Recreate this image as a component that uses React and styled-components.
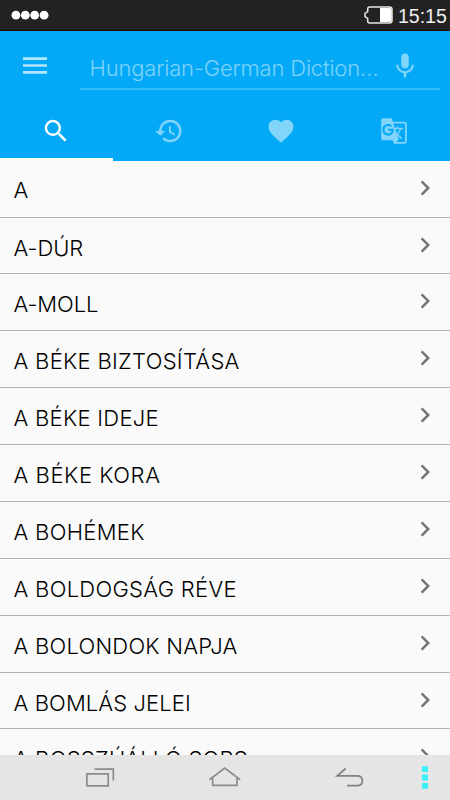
import React from "react";
import styled, { createGlobalStyle } from "styled-components";
import { MdSearch, MdHistory, MdFavorite, MdGTranslate, MdMic, MdChevronRight } from "react-icons/md";

const GlobalStyle = createGlobalStyle`
  * { box-sizing: border-box; }
  body { margin: 0; background: #fafafa; }
`;

const Screen = styled.div`
  width: 450px;
  height: 800px;
  display: flex;
  flex-direction: column;
  overflow: hidden;
  background: #fafafa;
  font-family: Inter, "Liberation Sans", sans-serif;
  font-weight: 300;
`;

const StatusBar = styled.div`
  height: 31px;
  flex: none;
  display: flex;
  align-items: center;
  justify-content: space-between;
  padding: 0 2px 0 11px;
  background: #222;
  border-bottom: 1px solid #1c0d0a;
  svg { display: block; }
`;

const StatusRight = styled.div`
  display: flex;
  align-items: center;
  gap: 5px;
`;

const Clock = styled.span`
  width: 50px;
  font: 400 19.5px/30px "Liberation Sans", sans-serif;
  color: #f2f2f2;
  white-space: nowrap;
  padding-top: 2px;
`;

const Header = styled.header`
  height: 130px;
  flex: none;
  background: #03a9f6;
  display: flex;
  flex-direction: column;
`;

const Toolbar = styled.div`
  height: 70px;
  display: flex;
  padding: 0 10px 0 23px;
`;

const MenuButton = styled.button`
  width: 57px;
  padding: 26px 0 0;
  border: 0;
  background: none;
  display: flex;
  align-items: flex-start;
`;

const SearchField = styled.div`
  flex: 1;
  height: 59px;
  display: flex;
  padding-left: 9.5px;
  border-bottom: 2px solid #36baf8;
`;

const Placeholder = styled.span`
  width: 300px;
  padding-top: 21px;
  font-size: 22px;
  line-height: 32px;
  letter-spacing: -0.16px;
  color: #7fd2fa;
  white-space: nowrap;
`;

const MicIcon = styled(MdMic)`
  width: 30px;
  height: 30px;
  margin-top: 19.5px;
  color: #81d4fa;
`;

const Tabs = styled.nav`
  height: 60px;
  display: grid;
  grid-template-columns: repeat(4, 1fr);
`;

const Tab = styled.div`
  display: flex;
  justify-content: center;
  padding-top: 15px;
  color: ${(p) => (p.$active ? "#fff" : "#81d4fa")};
  border-bottom: ${(p) => (p.$active ? "3px solid #fafafa" : "0")};
  svg { width: 30px; height: 30px; }
`;

const TranslateIcon = styled(MdGTranslate)`
  && {
    width: 28px;
    height: 28px;
    margin-top: 1px;
  }
`;

const WordList = styled.main`
  flex: 1;
  min-height: 0;
  overflow: hidden;
`;

const Row = styled.div`
  height: 56.89px;
  display: flex;
  align-items: flex-start;
  justify-content: space-between;
  padding: 0 10px 0 13.5px;
  border-bottom: 1px solid #b3b3b3;
`;

const FirstRow = styled(Row)`
  height: 56.5px;
  > span { padding-top: 13.4px; }
`;

const Word = styled.span`
  padding-top: 14px;
  font-size: 22px;
  line-height: 32px;
  letter-spacing: ${(p) => p.$tracking}px;
  color: #000;
  white-space: nowrap;
`;

const Chevron = styled(MdChevronRight)`
  width: 30px;
  height: 30px;
  margin-top: 12px;
  color: #757575;
`;

const NavBar = styled.footer`
  height: 45px;
  flex: none;
  display: grid;
  grid-template-columns: 122px 127px 86px 1fr;
  padding-left: 85px;
  align-items: start;
  background: #e5e5e5;
  svg { display: block; margin-top: 10px; }
`;

const words = [
  ["A", 0],
  ["A-DÚR", -0.05],
  ["A-MOLL", -0.1],
  ["A BÉKE BIZTOSÍTÁSA", 0.29],
  ["A BÉKE IDEJE", 0.27],
  ["A BÉKE KORA", 0.56],
  ["A BOHÉMEK", 0.3],
  ["A BOLDOGSÁG RÉVE", 0.29],
  ["A BOLONDOK NAPJA", 0.24],
  ["A BOMLÁS JELEI", 0.1],
  ["A BOSSZÚÁLLÓ SORS", 0.29],
];

export default function App() {
  return (
    <Screen>
      <GlobalStyle />
      <StatusBar>
        <svg width="40" height="12" viewBox="0 0 40 12" fill="#fff">
          <circle cx="4.9" cy="6.2" r="4.4" />
          <circle cx="14.3" cy="6.2" r="4.4" />
          <circle cx="23.7" cy="6.2" r="4.4" />
          <circle cx="33.1" cy="6.2" r="4.4" />
        </svg>
        <StatusRight>
          <svg width="29" height="18" viewBox="0 0 29 18">
            <path d="M5.7 1H25.5Q28 1 28 3.5V14.5Q28 17 25.5 17H5.7Q3.7 17 3.7 15V12.5L1 10.7V7.3L3.7 5.5V3Q3.7 1 5.7 1Z" fill="none" stroke="#e8e8e8" strokeWidth="1.5" />
            <path d="M16 2H25.5Q27.5 2 27.5 4V14Q27.5 16 25.5 16H16Z" fill="#fff" />
          </svg>
          <Clock>15:15</Clock>
        </StatusRight>
      </StatusBar>
      <Header>
        <Toolbar>
          <MenuButton aria-label="Menu">
            <svg width="24" height="18" viewBox="0 0 24 18" fill="#b3e5fc">
              <path d="M0 .2h24v2.7H0zM0 7.2h24v2.6H0zM0 14h24v2.7H0z" />
            </svg>
          </MenuButton>
          <SearchField>
            <Placeholder>Hungarian-German Diction…</Placeholder>
            <MicIcon />
          </SearchField>
        </Toolbar>
        <Tabs>
          <Tab $active><MdSearch /></Tab>
          <Tab><MdHistory /></Tab>
          <Tab><MdFavorite /></Tab>
          <Tab><TranslateIcon /></Tab>
        </Tabs>
      </Header>
      <WordList>
        {words.map(([word, tracking], i) => {
          const Item = i === 0 ? FirstRow : Row;
          return (
            <Item key={word}>
              <Word $tracking={tracking}>{word}</Word>
              <Chevron />
            </Item>
          );
        })}
      </WordList>
      <NavBar>
        <svg width="30" height="24" viewBox="0 0 30 24" fill="none" stroke="#8c8c8c" strokeWidth="1.7">
          <path d="M1.9 8.8H23.2V20.9H1.9ZM9.5 4.1H28.3V15.5" />
        </svg>
        <svg width="35" height="24" viewBox="0 0 35 24" fill="none" stroke="#8c8c8c" strokeWidth="1.7">
          <path d="M2.3 14.7L17.7 3L33.2 14.7M5.7 12.5V20.3H30V12.5" />
        </svg>
        <svg width="30" height="24" viewBox="0 0 30 24" fill="none" stroke="#828282" strokeWidth="1.7">
          <path d="M11.7 3.5L3.2 10.8H23.2Q28.4 10.8 28.4 15.8Q28.4 20.7 23.2 20.7H13" />
        </svg>
        <svg width="10" height="24" viewBox="0 0 10 24" fill="#3cf0fa">
          <path d="M2 1.2h6v5.8h-6zM2 9.6h6v5.8h-6zM2 18h6v5.8h-6z" />
        </svg>
      </NavBar>
    </Screen>
  );
}
